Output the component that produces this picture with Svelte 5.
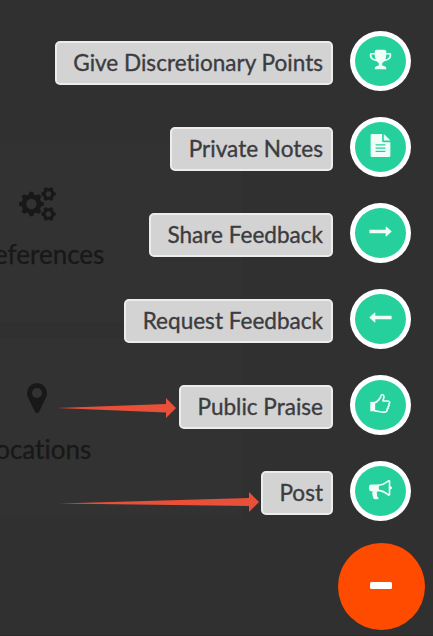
<script>
	const actions = [
		{ label: 'Give Discretionary Points', icon: 'trophy' },
		{ label: 'Private Notes', icon: 'file' },
		{ label: 'Share Feedback', icon: 'right' },
		{ label: 'Request Feedback', icon: 'left' },
		{ label: 'Public Praise', icon: 'thumb' },
		{ label: 'Post', icon: 'bullhorn' }
	];

	// toothed ring with a hole, filled with evenodd
	function gear(cx, cy, r, hole, teeth) {
		const pts = [];
		const step = (Math.PI * 2) / teeth;
		for (let i = 0; i < teeth; i++) {
			const a = i * step;
			for (const [da, k] of [[-0.3, 0.8], [-0.2, 1], [0.2, 1], [0.3, 0.8]]) {
				const t = a + da * step;
				pts.push(`${(cx + Math.cos(t) * r * k).toFixed(2)} ${(cy + Math.sin(t) * r * k).toFixed(2)}`);
			}
		}
		return `M${pts.join('L')}ZM${cx - hole} ${cy}a${hole} ${hole} 0 1 0 ${hole * 2} 0a${hole} ${hole} 0 1 0 ${-hole * 2} 0Z`;
	}

	const gears = [gear(12.4, 17, 12.4, 5.2, 8), gear(29.5, 7, 7.3, 2.8, 6), gear(29.5, 27, 7.3, 2.8, 6)];
</script>

<div class="screen">
	<div class="tiles">
		<div class="tile">
			<svg class="cogs" viewBox="0 0 37 34">
				{#each gears as d}
					<path {d} fill-rule="evenodd" />
				{/each}
			</svg>
			<span>Preferences</span>
		</div>
		<div class="tile">
			<svg class="marker" viewBox="384 128 1024 1536">
				<path d="M1152 640q0-106-75-181t-181-75-181 75-75 181 75 181 181 75 181-75 75-181zm256 0q0 109-33 179l-364 774q-16 33-47.5 52t-67.5 19-67.5-19-46.5-52l-365-774q-33-70-33-179 0-212 150-362t362-150 362 150 150 362z" />
			</svg>
			<span>Locations</span>
		</div>
	</div>

	<div class="menu">
		{#each actions as action}
			<div class="action">
				<span class="label">{action.label}</span>
				<button class="round" aria-label={action.label}>
					<svg viewBox="0 0 1792 1792">
						{#if action.icon === 'trophy'}
							<path d="M522 883q-74-162-74-371h-256v96q0 78 94.5 162t235.5 113zm1078-275v-96h-256q0 209-74 371 141-29 235.5-113t94.5-162zm128-128v128q0 71-41.5 143t-112 130-173 97.5-215.5 44.5q-42 54-95 95-38 34-52.5 72.5t-14.5 89.5q0 54 30.5 91t97.5 37q75 0 133.5 45.5t58.5 114.5v64q0 14-9 23t-23 9h-832q-14 0-23-9t-9-23v-64q0-69 58.5-114.5t133.5-45.5q67 0 97.5-37t30.5-91q0-51-14.5-89.5t-52.5-72.5q-53-41-95-95-113-5-215.5-44.5t-173-97.5-112-130-41.5-143v-128q0-40 28-68t68-28h288v-96q0-66 47-113t113-47h576q66 0 113 47t47 113v96h288q40 0 68 28t28 68z" />
						{:else if action.icon === 'file'}
							<path fill-rule="evenodd" d="M224 0H1024V544q0 96 96 96H1664V1696q0 96-96 96H224q-96 0-96-96V96q0-96 96-96zM1152 10q40 16 70 46l396 396q30 30 42 60H1152zM512 800V896H1280V800zM512 1056V1152H1280V1056zM512 1312V1408H1280V1312z" />
						{:else if action.icon === 'right'}
							<path d="M32 768H1300V544q0-45 45-32L1750 870q20 26 0 52L1345 1280q-45 13-45-32V1024H32z" />
						{:else if action.icon === 'left'}
							<path d="M1760 768H492V544q0-45-45-32L42 870q-20 26 0 52L447 1280q45 13 45-32V1024H1760z" />
						{:else if action.icon === 'thumb'}
							<path d="M100 768H480V1500H100z" />
							<path class="line" d="M440 820C650 800 720 620 850 500C930 420 910 190 1010 190C1150 190 1180 330 1160 430C1145 520 1090 600 1088 704H1460C1620 704 1670 850 1540 930C1600 1020 1570 1110 1480 1150C1510 1240 1470 1320 1400 1350C1430 1510 1330 1570 1190 1570C900 1590 730 1490 440 1470" />
						{:else}
							<path d="M1664 640q53 0 90.5 37.5t37.5 90.5-37.5 90.5-90.5 37.5v384q0 52-38 90t-90 38q-417-347-812-380-58 19-91 66t-31 100.5 40 92.5q-20 33-23 65.5t6 58 33.5 55 48 50 61.5 50.5q-29 58-111.5 83t-168.5 11.5-132-55.5q-7-23-29.5-87.5t-32-94.5-23-89-15-101 3.5-98.5 22-110.5h-122q-66 0-113-47t-47-113v-192q0-66 47-113t113-47h480q435 0 896-384 52 0 90 38t38 90v384zm-128 604v-954q-394 302-768 343v270q377 42 768 341z" />
						{/if}
					</svg>
				</button>
			</div>
		{/each}
		<button class="close" aria-label="Close"><i></i></button>
	</div>

	<svg class="pointers" viewBox="0 0 433 636">
		<path d="M57 408L166 404V398L176 408L166 418V412.5Z" />
		<path d="M59 503.6L249 498V492L259 502L249 512V506Z" />
	</svg>
</div>

<style>
	:global(body) {
		margin: 0;
		background: #303030;
	}

	.screen {
		position: relative;
		display: grid;
		box-sizing: border-box;
		width: 433px;
		height: 636px;
		overflow: hidden;
		border-bottom: 1px solid #2b2b2b;
		background: #303030;
		font-family: Lato, 'Liberation Sans', sans-serif;
		font-variant-ligatures: none;
	}

	.tiles,
	.menu {
		grid-area: 1 / 1;
	}

	.tiles {
		display: flex;
		flex-direction: column;
		gap: 16px;
		padding-top: 143px;
	}

	.tile {
		display: flex;
		flex-direction: column;
		align-items: center;
		box-sizing: border-box;
		width: 410px;
		height: 179px;
		margin-left: -168px;
		padding-top: 44px;
		background: #323232;
		color: #181818;
		font-size: 26px;
		line-height: 30px;
		-webkit-text-stroke: 0.3px #181818;
	}

	.tile svg {
		fill: #181818;
	}

	.cogs {
		width: 37px;
		height: 34px;
		margin-bottom: 18px;
	}

	.marker {
		width: 20px;
		height: 30px;
		margin: 1px 0 21px;
	}

	.menu {
		position: relative;
		display: flex;
		flex-direction: column;
		align-items: flex-end;
		padding: 31px 8px 0 0;
	}

	.action {
		display: flex;
		align-items: flex-start;
		gap: 17px;
		height: 86px;
		margin-right: 14px;
	}

	.label {
		box-sizing: border-box;
		height: 44px;
		margin-top: 10px;
		padding: 0 8px 0 16.5px;
		border: 2px solid #ececec;
		border-radius: 5px;
		background: #d3d3d3;
		color: #3c3c40;
		font-size: 22.55px;
		line-height: 39px;
		white-space: nowrap;
		-webkit-text-stroke: 0.35px #3c3c40;
	}

	.round {
		display: flex;
		align-items: center;
		justify-content: center;
		box-sizing: border-box;
		width: 61px;
		height: 60px;
		padding: 0 0 4px;
		border: 5px solid #fff;
		border-radius: 50%;
		background: #26d09c;
	}

	.round svg {
		width: 23px;
		height: 23px;
		fill: #effff8;
	}

	.round .line {
		fill: none;
		stroke: #effff8;
		stroke-width: 125;
		stroke-linejoin: round;
	}

	.close {
		display: flex;
		align-items: center;
		justify-content: center;
		width: 87px;
		height: 87px;
		margin-top: -4px;
		padding: 0 1px 2px 0;
		border: 0;
		border-radius: 50%;
		background: #ff4b00;
	}

	.close i {
		width: 22px;
		height: 7px;
		border-radius: 1.5px;
		background: #fff;
	}

	.pointers {
		position: absolute;
		inset: 0;
		width: 433px;
		height: 636px;
		fill: #e8503a;
		pointer-events: none;
	}
</style>
